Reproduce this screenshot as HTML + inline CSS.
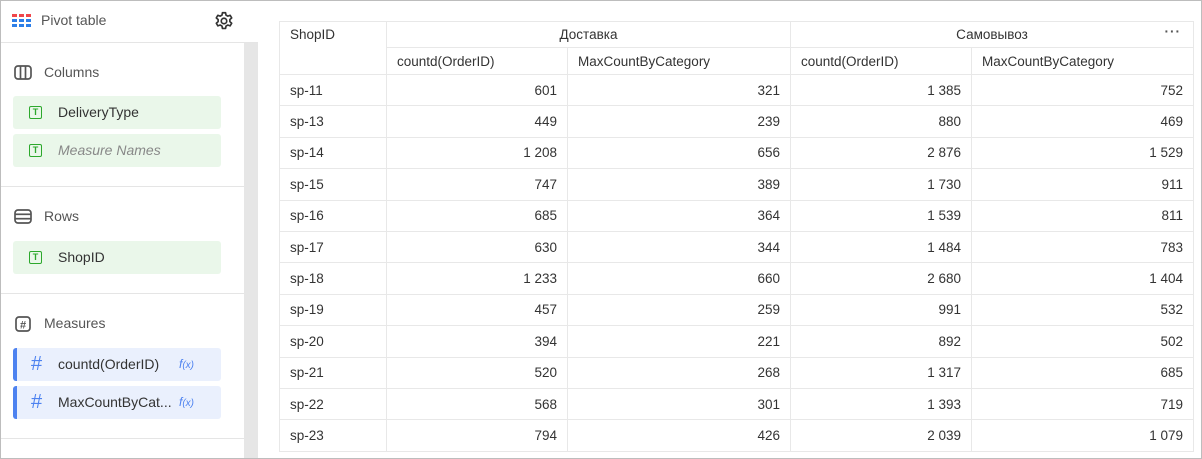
<!DOCTYPE html>
<html><head><meta charset="utf-8"><style>
*{box-sizing:border-box;margin:0;padding:0}
body{width:1202px;height:459px;overflow:hidden;background:#fff;font-family:"Liberation Sans",sans-serif;font-size:13px;color:#333;position:relative}
.frame{position:absolute;left:0;top:0;width:1202px;height:459px;border:1px solid #bdbdbd;pointer-events:none;z-index:5}
.side{position:absolute;left:0;top:0;width:244px;height:459px;background:#fff}
.scroll{position:absolute;left:244px;top:0;width:14px;height:459px;background:#e6e6e6}
.hdr{position:absolute;left:0;top:0;width:258px;height:43px;border-bottom:1px solid #e5e5e5;background:#fff}
.sep{position:absolute;left:0;width:244px;height:1px;background:#e5e5e5}
.lbl{position:absolute;left:44px;font-size:14px;color:#555}
.item{position:absolute;left:13px;width:208px;height:33px;border-radius:3px;font-size:14px;line-height:33px;padding-left:45px;color:#333}
.g{background:#eaf7ea}
.b{background:#eaf0fd;border-left:4px solid #4d82f0;padding-left:41px}
.t{position:absolute;left:16px;top:10px;width:13px;height:13px;border:1.6px solid #2ca82c;border-radius:2px;font-size:9px;line-height:10px;text-align:center;color:#2ca82c;font-weight:bold;font-style:normal}
.hash{position:absolute;left:14px;top:0;color:#4d82f0;font-size:20px}
.fx{position:absolute;left:162px;top:0;color:#4d82f0;font-size:12px;font-style:italic}
table{position:absolute;left:279px;top:21px;border-collapse:collapse;font-size:13.5px;color:#333}
td{border:1px solid #e8e8e8;height:31.4px;padding:0 10px}
td.n{text-align:right}
.topline{position:absolute;left:258px;top:0;width:944px;height:1px;background:#e5e5e5}
</style></head><body>
<div class="side">
<div class="sep" style="top:186px"></div>
<div class="sep" style="top:293px"></div>
<div class="sep" style="top:438px"></div>
<svg style="position:absolute;left:14px;top:65px" width="18" height="15"><rect x="1" y="1" width="16" height="13" rx="3" fill="none" stroke="#555" stroke-width="1.7"/><line x1="6.5" y1="1" x2="6.5" y2="14" stroke="#555" stroke-width="1.7"/><line x1="11.5" y1="1" x2="11.5" y2="14" stroke="#555" stroke-width="1.7"/></svg>
<div class="lbl" style="top:64px">Columns</div>
<div class="item g" style="top:96px"><span class="t">T</span>DeliveryType</div>
<div class="item g" style="top:134px;color:#888;font-style:italic"><span class="t">T</span>Measure Names</div>
<svg style="position:absolute;left:14px;top:209px" width="18" height="15"><rect x="1" y="1" width="16" height="13" rx="3" fill="none" stroke="#555" stroke-width="1.7"/><line x1="1" y1="5.3" x2="17" y2="5.3" stroke="#555" stroke-width="1.7"/><line x1="1" y1="9.7" x2="17" y2="9.7" stroke="#555" stroke-width="1.7"/></svg>
<div class="lbl" style="top:208px">Rows</div>
<div class="item g" style="top:241px"><span class="t">T</span>ShopID</div>
<svg style="position:absolute;left:15px;top:316px" width="16" height="16"><rect x="1" y="1" width="14" height="14" rx="3" fill="none" stroke="#555" stroke-width="1.7"/><text x="8" y="12.5" font-size="11" font-weight="bold" text-anchor="middle" fill="#555" font-family="Liberation Sans">#</text></svg>
<div class="lbl" style="top:315px">Measures</div>
<div class="item b" style="top:348px"><span class="hash">#</span>countd(OrderID)<span class="fx">f<small>(x)</small></span></div>
<div class="item b" style="top:386px"><span class="hash">#</span>MaxCountByCat...<span class="fx">f<small>(x)</small></span></div>
</div>
<div class="scroll"></div>
<div class="hdr">
<svg style="position:absolute;left:12px;top:14px" width="20" height="14">
<g fill="#f0464a"><rect x="0" y="0" width="5" height="3"/><rect x="7" y="0" width="5" height="3"/><rect x="14" y="0" width="5" height="3"/></g>
<g fill="#2d7fe8"><rect x="0" y="5" width="5" height="3"/><rect x="7" y="5" width="5" height="3"/><rect x="14" y="5" width="5" height="3"/><rect x="0" y="10" width="5" height="3"/><rect x="7" y="10" width="5" height="3"/><rect x="14" y="10" width="5" height="3"/></g></svg>
<div style="position:absolute;left:41px;top:12px;font-size:14px;color:#555">Pivot table</div>
<svg style="position:absolute;left:213px;top:10px" width="22" height="22" viewBox="0 0 24 24"><path d="M10.3 2h3.4l.5 2.6 2 1.1 2.5-.9 1.7 2.9-2 1.7v2.3l2 1.7-1.7 2.9-2.5-.9-2 1.1-.5 2.6h-3.4l-.5-2.6-2-1.1-2.5.9-1.7-2.9 2-1.7V9.4l-2-1.7 1.7-2.9 2.5.9 2-1.1z" fill="none" stroke="#333" stroke-width="1.8" stroke-linejoin="round" transform="translate(0 1)"/><circle cx="12" cy="12" r="3" fill="none" stroke="#333" stroke-width="1.8"/></svg>
</div>
<div class="topline"></div>
<table>
<tr><td rowspan="2" style="width:107px;vertical-align:top;padding-top:5px;height:26px">ShopID</td><td colspan="2" style="text-align:center;height:26px">Доставка</td><td colspan="2" style="text-align:center;height:26px;position:relative">Самовывоз<span style="position:absolute;right:12px;top:2px;color:#555;font-weight:bold;letter-spacing:1px">···</span></td></tr>
<tr><td style="width:181px;height:27px">countd(OrderID)</td><td style="width:223px;height:27px">MaxCountByCategory</td><td style="width:181px;height:27px">countd(OrderID)</td><td style="width:222px;height:27px">MaxCountByCategory</td></tr>
<tr><td>sp-11</td><td class="n">601</td><td class="n">321</td><td class="n">1 385</td><td class="n">752</td></tr>
<tr><td>sp-13</td><td class="n">449</td><td class="n">239</td><td class="n">880</td><td class="n">469</td></tr>
<tr><td>sp-14</td><td class="n">1 208</td><td class="n">656</td><td class="n">2 876</td><td class="n">1 529</td></tr>
<tr><td>sp-15</td><td class="n">747</td><td class="n">389</td><td class="n">1 730</td><td class="n">911</td></tr>
<tr><td>sp-16</td><td class="n">685</td><td class="n">364</td><td class="n">1 539</td><td class="n">811</td></tr>
<tr><td>sp-17</td><td class="n">630</td><td class="n">344</td><td class="n">1 484</td><td class="n">783</td></tr>
<tr><td>sp-18</td><td class="n">1 233</td><td class="n">660</td><td class="n">2 680</td><td class="n">1 404</td></tr>
<tr><td>sp-19</td><td class="n">457</td><td class="n">259</td><td class="n">991</td><td class="n">532</td></tr>
<tr><td>sp-20</td><td class="n">394</td><td class="n">221</td><td class="n">892</td><td class="n">502</td></tr>
<tr><td>sp-21</td><td class="n">520</td><td class="n">268</td><td class="n">1 317</td><td class="n">685</td></tr>
<tr><td>sp-22</td><td class="n">568</td><td class="n">301</td><td class="n">1 393</td><td class="n">719</td></tr>
<tr><td>sp-23</td><td class="n">794</td><td class="n">426</td><td class="n">2 039</td><td class="n">1 079</td></tr>
</table>
<div class="frame"></div>
</body></html>
